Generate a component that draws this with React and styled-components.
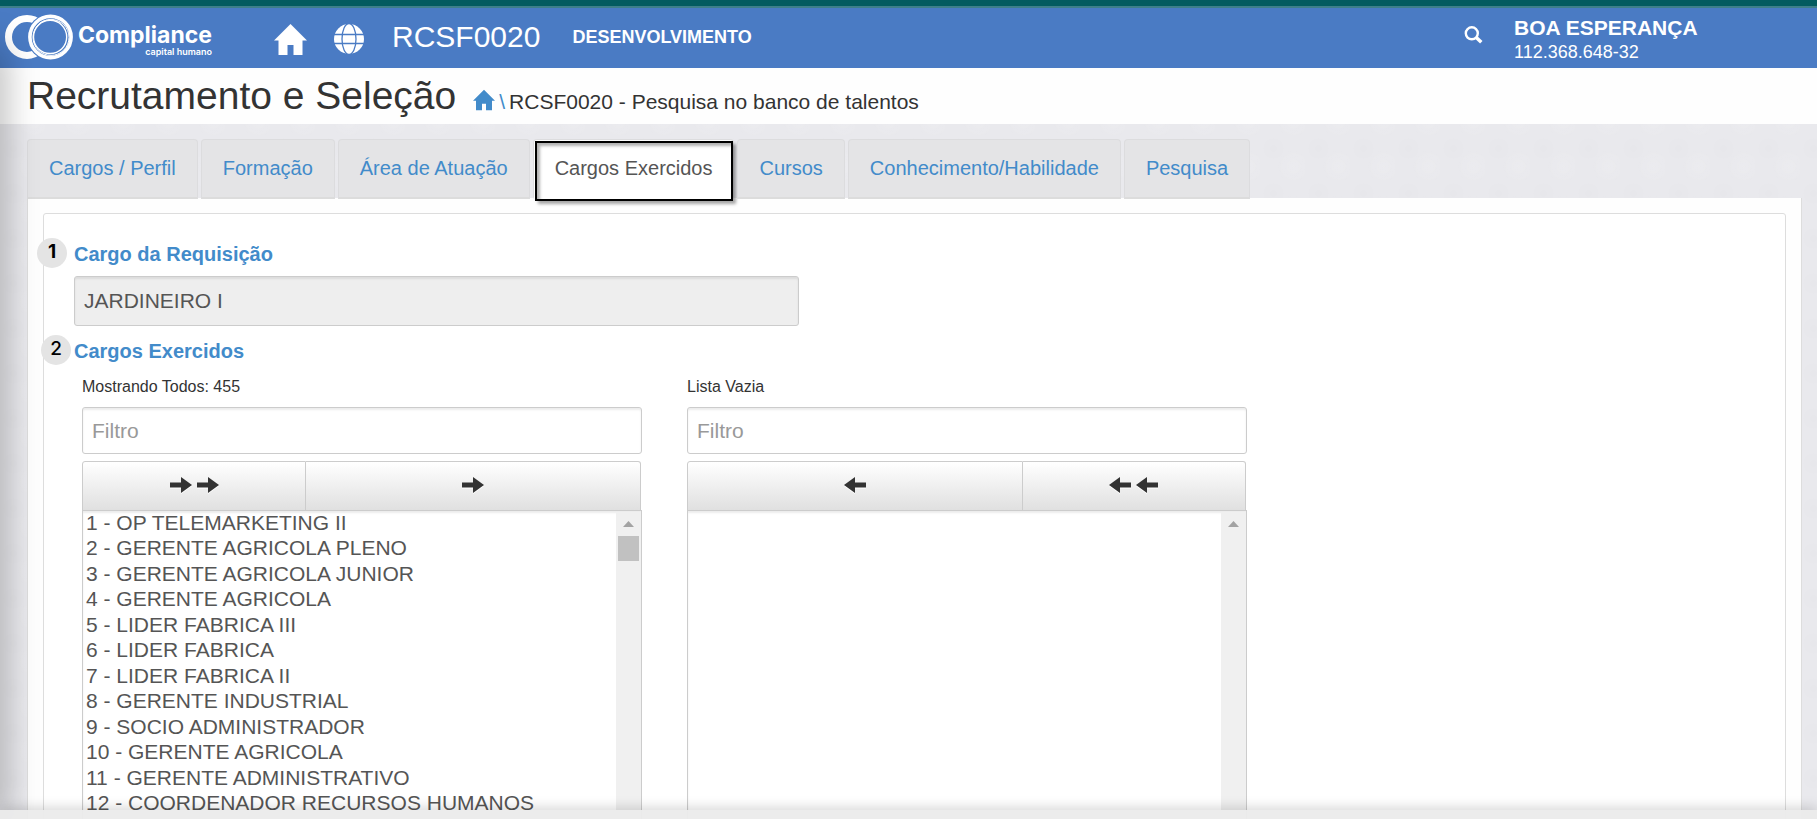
import React from "react";
import styled, { createGlobalStyle, css } from "styled-components";

const GlobalStyle = createGlobalStyle`
  *, *::before, *::after { box-sizing: border-box; }
  body {
    margin: 0;
    font-family: "Liberation Sans", Arial, sans-serif;
    font-size: 21px;
    color: #333;
  }
`;

const Shell = styled.div`
  height: 100vh;
  display: flex;
  flex-direction: column;
  overflow: hidden;
  background-color: #e9e9ed;
  background-image: radial-gradient(circle at 30% 30%, rgba(0, 0, 0, 0.008), transparent 30%),
    radial-gradient(circle at 75% 70%, rgba(255, 255, 255, 0.12), transparent 35%);
  background-size: 45px 45px;
`;

const Header = styled.header`
  flex: none;
  height: 68px;
  display: flex;
  align-items: center;
  padding: 0 120px 0 4px;
  color: #fff;
  background: #4a7bc4;
  border-top: 6px solid #045b60;
  box-shadow: inset 0 2px #3f7f8a;
`;

const Brand = styled.a`
  display: flex;
  align-items: center;
  gap: 4px;
  width: 270px;
  color: #fff;
  text-decoration: none;
`;

const BrandText = styled.span`
  display: flex;
  flex-direction: column;
  align-items: flex-end;
  padding-top: 6px;
  font-family: Inter, sans-serif;
  font-weight: 700;
  font-size: 23px;
  line-height: 24px;
`;

const BrandTagline = styled.small`
  font-size: 9px;
  font-weight: 600;
  line-height: 10px;
`;

const IconLink = styled.a`
  display: flex;
  padding-top: 4px;
  color: inherit;
  margin-right: ${({ $gap }) => $gap}px;
`;

const ScreenCode = styled.span`
  font-size: 30px;
  line-height: 36px;
  margin-right: 32px;
`;

const Environment = styled.strong`
  font-size: 18px;
  line-height: 24px;
`;

const SearchButton = styled.button`
  display: flex;
  margin-left: auto;
  padding: 0 0 4px;
  border: 0;
  background: none;
  color: inherit;
`;

const User = styled.div`
  width: 183px;
  margin-left: 31px;
  padding-top: 5px;
  white-space: nowrap;
  line-height: 24px;
`;

const UserId = styled.div`
  font-size: 18px;
`;

const TitleBar = styled.div`
  flex: none;
  height: 56px;
  display: flex;
  align-items: baseline;
  padding: 6px 27px 0;
  background: #fefefe;
`;

const Title = styled.h1`
  margin: 0 17px 0 0;
  font-size: 39px;
  font-weight: 400;
  line-height: 44px;
`;

const Breadcrumb = styled.nav`
  display: flex;
  align-items: baseline;
  gap: 4px;
  a { color: #428bca; }
  svg { vertical-align: -2px; }
`;

const Separator = styled.span`
  color: #428bca;
`;

const Main = styled.main`
  flex: 1;
  min-height: 0;
  display: flex;
  flex-direction: column;
  padding: 15px 15px 0 27px;
`;

const Tabs = styled.nav`
  display: flex;
  gap: 3px;
`;

const Tab = styled.a`
  position: relative;
  height: 60px;
  padding: 16px 21px;
  font-size: 20px;
  line-height: 24px;
  white-space: nowrap;
  color: #428bca;
  text-decoration: none;
  background: #e4e4e6;
  border: 1px solid #dcdcde;
  border-bottom: 2px solid #dcdcdc;
  border-radius: 4px 4px 0 0;
  ${({ $active }) =>
    $active &&
    css`
      color: #555;
      background: #fff;
      border-bottom-color: #fff;
      &::after {
        content: "";
        position: absolute;
        inset: 1px 0 -4px 1px;
        border: 2px solid #000;
        box-shadow: 3px 3px 3px rgba(0, 0, 0, 0.35), inset 3px 3px 3px rgba(0, 0, 0, 0.3);
      }
    `}
`;

const Panel = styled.section`
  flex: 1 0 auto;
  margin-top: -1px;
  padding: 15px;
  background: #fefefe;
  border: solid #ddd;
  border-width: 0 1px;
`;

const Form = styled.form`
  padding: 25px 30px 30px;
  background: #fff;
  border: 1px solid #ddd;
  border-radius: 3px;
`;

const FieldLabel = styled.label`
  position: relative;
  display: block;
  width: fit-content;
  font-size: 20px;
  font-weight: 700;
  line-height: 30px;
  color: #428bca;
`;

const Badge = styled.span`
  position: absolute;
  top: -1px;
  left: ${({ $left }) => $left}px;
  width: 30px;
  height: 30px;
  border-radius: 50%;
  background: #e4e4e4;
  color: #000;
  font: ${({ $weight }) => $weight} 19px/28px Inter, sans-serif;
  text-align: center;
`;

const fieldBox = css`
  display: block;
  width: 100%;
  border: 1px solid #ccc;
  font-family: inherit;
  font-size: 21px;
  color: #555;
  box-shadow: inset 0 2px 2px rgba(0, 0, 0, 0.075);
`;

const TextInput = styled.input`
  ${fieldBox}
  height: 47px;
  padding: 0 9px;
  border-radius: 3px;
  background: #fff;
  &::placeholder { color: #999; opacity: 1; }
  &:disabled {
    height: 50px;
    max-width: 725px;
    margin: 7px 0 10px;
    background: #eee;
  }
`;

const DualList = styled.div`
  display: flex;
  gap: 45px;
  padding: 9px 8px 0;
`;

const ListColumn = styled.div`
  flex: 0 1 560px;
  min-width: 0;
`;

const ListInfo = styled.label`
  display: block;
  margin-bottom: 8px;
  font-size: 16px;
  line-height: 24px;
`;

const MoveButtons = styled.div`
  display: flex;
  margin: 7px 1px -1px 0;
`;

const MoveButton = styled.button`
  flex: ${({ $share }) => $share} 1 0;
  height: 50px;
  display: flex;
  align-items: center;
  justify-content: center;
  gap: 5px;
  padding: 0 0 2px;
  color: #333;
  background: linear-gradient(#fff, #e0e0e0);
  border: 1px solid #ccc;
  &:first-child { border-radius: 3px 0 0 0; }
  &:last-child { border-radius: 0 3px 0 0; }
  & + & { border-left: 0; }
  svg { filter: drop-shadow(0 1px 0 #fff); }
`;

const ListFrame = styled.div`
  position: relative;
`;

const ListBox = styled.select`
  ${fieldBox}
  height: 400px;
  padding: 0;
  border-radius: 0;
  background: #fff;
  outline: 0;
  overflow-y: scroll;
  scrollbar-width: none;
  option {
    height: 25px;
    min-height: 25px;
    padding: 0 3px;
    line-height: 25px;
  }
  option:nth-child(even) {
    height: 26px;
    min-height: 26px;
  }
`;

const ScrollTrack = styled.div`
  position: absolute;
  top: 2px;
  right: 1px;
  bottom: 1px;
  width: 25px;
  padding: 9px 2px;
  background: #f0f0f0;
  svg { display: block; margin: 0 auto 9px; }
`;

const ScrollThumb = styled.div`
  height: 25px;
  background: #c1c1c1;
`;

const SideShadow = styled.div`
  position: fixed;
  top: 48px;
  bottom: 0;
  left: -20px;
  width: 20px;
  box-shadow: 0 0 34px 2px rgba(0, 0, 0, 0.35);
  clip-path: inset(-40px -60px 0 0);
  pointer-events: none;
`;

const Footer = styled.footer`
  position: fixed;
  left: 0;
  right: 0;
  bottom: 0;
  height: 9px;
  background: rgba(235, 235, 235, 0.95);
  box-shadow: 0 0 14px rgba(0, 0, 0, 0.25);
`;

const LogoMark = () => (
  <svg width="70" height="46" viewBox="0 0 70 46" fill="none" aria-hidden="true">
    <circle cx="23" cy="23" r="18.5" stroke="#fff" strokeWidth="7" />
    <circle cx="46.5" cy="23" r="23.5" fill="#4a7bc4" />
    <circle cx="46.5" cy="23" r="20.6" stroke="#fff" strokeWidth="3.6" />
    <circle cx="47" cy="23.4" r="18" stroke="#fff" strokeWidth="1" />
    <circle cx="46.1" cy="22.9" r="16.6" stroke="#fff" strokeWidth="1.4" />
  </svg>
);

const HomeIcon = ({ width, height }) => (
  <svg width={width} height={height} viewBox="0 0 33 31" fill="currentColor" aria-hidden="true">
    <path d="M16.5 0 33 16.500H28.500V31H19.500V21H13.500V31H4.500V16.500H0Z" />
  </svg>
);

const GlobeIcon = () => (
  <svg width="30" height="30" viewBox="0 0 30 30" aria-hidden="true">
    <circle cx="15" cy="15" r="15" fill="#fff" />
    <g fill="none" stroke="#4a7bc4" strokeWidth="1.3">
      <ellipse cx="15" cy="15" rx="7" ry="15.5" />
      <path d="M0 10.500H30M0 19.500H30" />
    </g>
  </svg>
);

const SearchIcon = () => (
  <svg width="19" height="18" viewBox="0 0 19 18" fill="none" stroke="currentColor" aria-hidden="true">
    <circle cx="7.8" cy="7.3" r="6" strokeWidth="2.4" />
    <path d="M12 11.3 17.3 16.2" strokeWidth="3.6" />
  </svg>
);

const Arrow = ({ left }) => (
  <svg width="22" height="16" viewBox="0 0 22 16" fill="currentColor" aria-hidden="true">
    <path d={left ? "M0 8 11 0V5.500H22V10.500H11V16Z" : "M22 8 11 0V5.500H0V10.500H11V16Z"} />
  </svg>
);

const tabs = [
  "Cargos / Perfil",
  "Formação",
  "Área de Atuação",
  "Cargos Exercidos",
  "Cursos",
  "Conhecimento/Habilidade",
  "Pesquisa",
];

const roles = [
  "OP TELEMARKETING II",
  "GERENTE AGRICOLA PLENO",
  "GERENTE AGRICOLA JUNIOR",
  "GERENTE AGRICOLA",
  "LIDER FABRICA III",
  "LIDER FABRICA",
  "LIDER FABRICA II",
  "GERENTE INDUSTRIAL",
  "SOCIO ADMINISTRADOR",
  "GERENTE AGRICOLA",
  "GERENTE ADMINISTRATIVO",
  "COORDENADOR RECURSOS HUMANOS",
];

function RoleList({ id, info, items, buttons, left }) {
  return (
    <ListColumn>
      <ListInfo htmlFor={id}>{info}</ListInfo>
      <TextInput type="text" placeholder="Filtro" aria-label={`Filtro: ${info}`} />
      <MoveButtons>
        {buttons.map(({ label, share, arrows }) => (
          <MoveButton key={label} type="button" aria-label={label} $share={share}>
            {Array.from({ length: arrows }, (_, i) => (
              <Arrow key={i} left={left} />
            ))}
          </MoveButton>
        ))}
      </MoveButtons>
      <ListFrame>
        <ListBox id={id} multiple>
          {items.map((name, i) => (
            <option key={i}>{`${i + 1} - ${name}`}</option>
          ))}
        </ListBox>
        <ScrollTrack aria-hidden="true">
          <svg width="11" height="6" viewBox="0 0 11 6" fill="#a3a3a3">
            <path d="M5.500 0 11 6H0Z" />
          </svg>
          {items.length > 0 && <ScrollThumb />}
        </ScrollTrack>
      </ListFrame>
    </ListColumn>
  );
}

export default function App() {
  return (
    <Shell>
      <GlobalStyle />
      <Header>
        <Brand href="#">
          <LogoMark />
          <BrandText>
            Compliance
            <BrandTagline>capital humano</BrandTagline>
          </BrandText>
        </Brand>
        <IconLink href="#" aria-label="Início" $gap={27}>
          <HomeIcon width={33} height={31} />
        </IconLink>
        <IconLink href="#" aria-label="Idioma" $gap={28}>
          <GlobeIcon />
        </IconLink>
        <ScreenCode>RCSF0020</ScreenCode>
        <Environment>DESENVOLVIMENTO</Environment>
        <SearchButton type="button" aria-label="Pesquisar">
          <SearchIcon />
        </SearchButton>
        <User>
          <strong>BOA ESPERANÇA</strong>
          <UserId>112.368.648-32</UserId>
        </User>
      </Header>
      <TitleBar>
        <Title>Recrutamento e Seleção</Title>
        <Breadcrumb>
          <a href="#" aria-label="Início">
            <HomeIcon width={22} height={22} />
          </a>
          <Separator>\</Separator>
          <span>RCSF0020 - Pesquisa no banco de talentos</span>
        </Breadcrumb>
      </TitleBar>
      <Main>
        <Tabs>
          {tabs.map((name) => (
            <Tab key={name} href="#" $active={name === "Cargos Exercidos"}>
              {name}
            </Tab>
          ))}
        </Tabs>
        <Panel>
          <Form>
            <FieldLabel htmlFor="cargo">
              <Badge $left={-37} $weight={700}>1</Badge>
              Cargo da Requisição
            </FieldLabel>
            <TextInput id="cargo" type="text" value="JARDINEIRO I" disabled readOnly />
            <FieldLabel htmlFor="disponiveis">
              <Badge $left={-33} $weight={500}>2</Badge>
              Cargos Exercidos
            </FieldLabel>
            <DualList>
              <RoleList
                id="disponiveis"
                info="Mostrando Todos: 455"
                items={roles}
                buttons={[
                  { label: "Mover todos", share: 2, arrows: 2 },
                  { label: "Mover selecionados", share: 3, arrows: 1 },
                ]}
              />
              <RoleList
                id="selecionados"
                info="Lista Vazia"
                items={[]}
                left
                buttons={[
                  { label: "Remover selecionados", share: 3, arrows: 1 },
                  { label: "Remover todos", share: 2, arrows: 2 },
                ]}
              />
            </DualList>
          </Form>
        </Panel>
      </Main>
      <SideShadow />
      <Footer />
    </Shell>
  );
}
